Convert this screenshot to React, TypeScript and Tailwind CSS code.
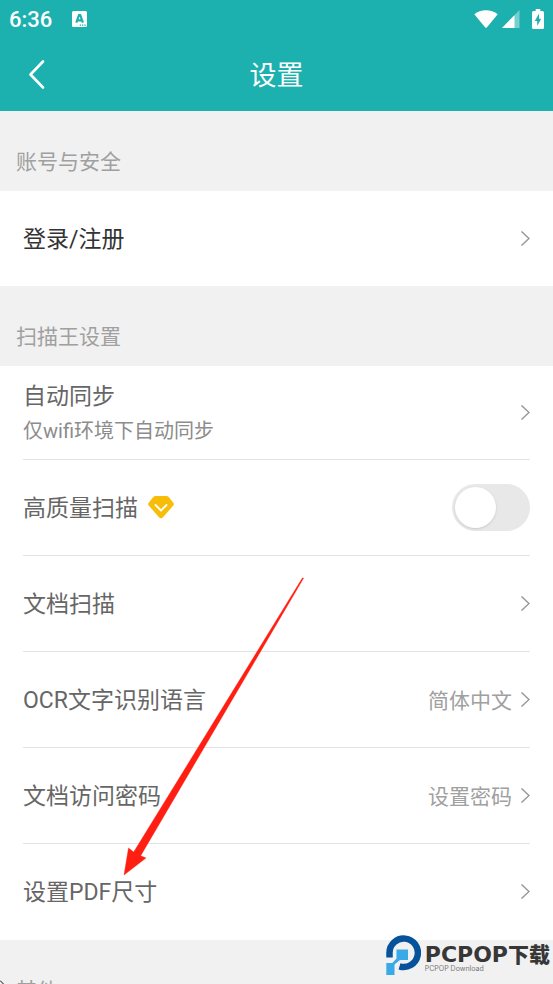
import React, { useState } from 'react';

interface SettingItem {
  title: string;
  subtitle?: string;
  value?: string;
  toggle?: boolean;
  premium?: boolean;
}

const SCAN_SETTINGS: SettingItem[] = [
  { title: '自动同步', subtitle: '仅wifi环境下自动同步' },
  { title: '高质量扫描', toggle: true, premium: true },
  { title: '文档扫描' },
  { title: 'OCR文字识别语言', value: '简体中文' },
  { title: '文档访问密码', value: '设置密码' },
  { title: '设置PDF尺寸' },
];

const Chevron: React.FC = () => (
  <svg className="w-2.5 h-4 shrink-0" viewBox="0 0 10 16" fill="none" stroke="#999999" strokeWidth={1.5}>
    <path d="M1.500 .5l7.500 7-7.500 7" />
  </svg>
);

const PremiumBadge: React.FC = () => (
  <svg className="w-[26px] h-6" viewBox="0 0 26 24">
    <path d="M7.500 0h11q1.300 0 2.200 1l4.600 5.700q1.200 1.500 0 2.900L15 21.200q-2 2-4 0L.7 9.600q-1.200-1.400 0-2.900L5.300 1Q6.200 0 7.500 0z" fill="#f7bd09" />
    <path d="M7.500 9l5.500 5.500L18.500 9" fill="none" stroke="#fff" strokeWidth={1.8} strokeLinecap="round" strokeLinejoin="round" />
  </svg>
);

const StatusBar: React.FC = () => (
  <div className="flex items-center justify-between h-[38px] pl-[9px] pr-[9px]">
    <div className="flex items-center gap-5">
      <span className="pt-0.5 text-[22px] font-medium leading-6">6:36</span>
      <svg className="w-4 h-4" viewBox="0 0 16 16">
        <rect x="0" y="0" width="15" height="16" rx="1.500" fill="#fff" />
        <path d="M4.300 11.700L7 4h1.200l2.700 7.700M5.600 9.300h4.200" fill="none" stroke="#1cb1af" strokeWidth={2.2} />
        <path d="M7.700 14.200h1.300M10 14.200h1.300M12.300 14.200h1.300" stroke="#1cb1af" strokeWidth={1.2} />
      </svg>
    </div>
    <div className="flex items-center">
      <svg className="w-6 h-[18px]" viewBox="0 0 24 18">
        <path d="M.3 4.200C6.500-1 17.500-1 23.700 4.200L13 17.300q-1 1.100-2 0z" fill="#fff" />
      </svg>
      <svg className="w-[18px] h-[18px] ml-1" viewBox="0 0 18 18">
        <path d="M0 18L17.500 0v18z" fill="#fff" fillOpacity={0.4} />
        <path d="M0 18L12.500 5.200V18z" fill="#fff" />
      </svg>
      <svg className="w-3 h-5 ml-3" viewBox="0 0 12 20">
        <path d="M3.700 0h4.600v2h2.200Q12 2 12 3.500v15q0 1.500-1.500 1.500h-9Q0 20 0 18.500v-15Q0 2 1.500 2h2.200z" fill="#fff" />
        <path d="M7 4.500L2.800 12h2.400v5L9.200 9.700H7z" fill="#1cb1af" />
      </svg>
    </div>
  </div>
);

const SectionTitle: React.FC<{ children: React.ReactNode }> = ({ children }) => (
  <h2 className="h-20 px-4 pt-[35px] text-[21px] leading-8 text-[#a0a0a0]">{children}</h2>
);

const SettingRow: React.FC<{ item: SettingItem; last: boolean }> = ({ item, last }) => {
  const [on, setOn] = useState(false);
  const border = last ? 'border-transparent' : 'border-[#e4e4e4]';

  if (item.toggle) {
    return (
      <li>
        <label className={`flex items-center w-full h-24 border-b ${border}`}>
          <span className="pt-0.5 text-[23px] leading-8">{item.title}</span>
          {item.premium && <span className="ml-[10px]"><PremiumBadge /></span>}
          <input
            type="checkbox"
            role="switch"
            checked={on}
            onChange={(e) => setOn(e.target.checked)}
            className="relative appearance-none ml-auto w-[78px] h-[47px] rounded-full bg-[#e8e8e8] checked:bg-[#1cb1af] before:absolute before:left-[3px] before:top-[3px] before:w-[41px] before:h-[41px] before:rounded-full before:bg-white before:shadow before:transition-transform checked:before:translate-x-[31px]"
          />
        </label>
      </li>
    );
  }

  return (
    <li>
      <button className={`flex items-center w-full text-left border-b ${border} ${item.subtitle ? 'h-[94px]' : 'h-24'}`}>
        <span className={`flex flex-col ${item.subtitle ? 'pt-1' : 'pt-0.5'}`}>
          <span className="text-[23px] leading-8">{item.title}</span>
          {item.subtitle && <span className="text-[20px] leading-9 text-[#8c8c8c]">{item.subtitle}</span>}
        </span>
        <span className="flex items-center gap-2 ml-auto">
          {item.value && <span className="pt-0.5 text-[21px] leading-8 text-[#a0a0a0]">{item.value}</span>}
          <Chevron />
        </span>
      </button>
    </li>
  );
};

const Watermark: React.FC = () => (
  <div className="absolute right-[3px] bottom-2 flex items-center gap-1">
    <svg className="w-[35px] h-[42px]" viewBox="0 0 35 42">
      <path d="M3.500 23.500V18.500A14.200 14.200 0 1 1 13.500 32.300" fill="none" stroke="#07539b" strokeWidth={6.5} />
      <path d="M10.500 15.500h11.500v10.500H14l-5.500 4.500V41H.3V29h6l4.200-4.500z" fill="#3aa9e8" />
    </svg>
    <div className="pt-2 whitespace-nowrap text-[#373737]">
      <div className="flex items-center leading-5 font-black">
        <span className="font-['DejaVu_Sans'] text-[22px]">PCPOP</span>
        <span className="text-[21px]">下载</span>
      </div>
      <div className="font-['Inter'] text-[7px] leading-2 font-normal text-[#777777]">PCPOP Download</div>
    </div>
  </div>
);

const App: React.FC = () => {
  return (
    <div className="relative h-screen overflow-hidden bg-[#f1f1f1] font-['Roboto','Noto_Sans_CJK_SC',sans-serif] font-normal text-[#666666]">
      <header className="bg-[#1cb1af] text-white">
        <StatusBar />
        <div className="grid grid-cols-[48px_1fr_48px] items-center h-[73px]">
          <button aria-label="返回" className="flex justify-end pr-0.5">
            <svg className="w-[18px] h-[30px]" viewBox="0 0 18 30" fill="none" stroke="currentColor" strokeWidth={2.6} strokeLinecap="round" strokeLinejoin="round">
              <path d="M15 1.500L2.500 14.500l12.500 13" />
            </svg>
          </button>
          <h1 className="pt-0.5 text-center text-[27px] leading-9">设置</h1>
        </div>
      </header>

      <main>
        <SectionTitle>账号与安全</SectionTitle>
        <div className="bg-white px-[23px]">
          <button className="flex items-center justify-between w-full h-[95px] text-[#333333]">
            <span className="pt-0.5 text-[23px] leading-8">登录/注册</span>
            <Chevron />
          </button>
        </div>

        <SectionTitle>扫描王设置</SectionTitle>
        <div className="relative bg-white">
          <ul className="px-[23px]">
            {SCAN_SETTINGS.map((item, i) => (
              <SettingRow key={item.title} item={item} last={i === SCAN_SETTINGS.length - 1} />
            ))}
          </ul>
          {/* Pointer to the PDF size entry */}
          <svg className="absolute left-[122px] top-[210px] w-[184px] h-[302px] pointer-events-none" viewBox="0 0 184 302">
            <path d="M180.500 1.800L11.700 276 6.500 272 2 299 24 282 18.700 279.700 181.500 2.300z" fill="#ff1f12" stroke="#ff1f12" strokeWidth={0.4} />
          </svg>
        </div>

        <SectionTitle>其他</SectionTitle>
      </main>

      <Watermark />
      <svg className="absolute left-0 bottom-0 w-1 h-1" viewBox="0 0 4 4" fill="none" stroke="#111" strokeWidth={1}>
        <path d="M0 .5L3.500 4" />
      </svg>
    </div>
  );
};

export default App;
